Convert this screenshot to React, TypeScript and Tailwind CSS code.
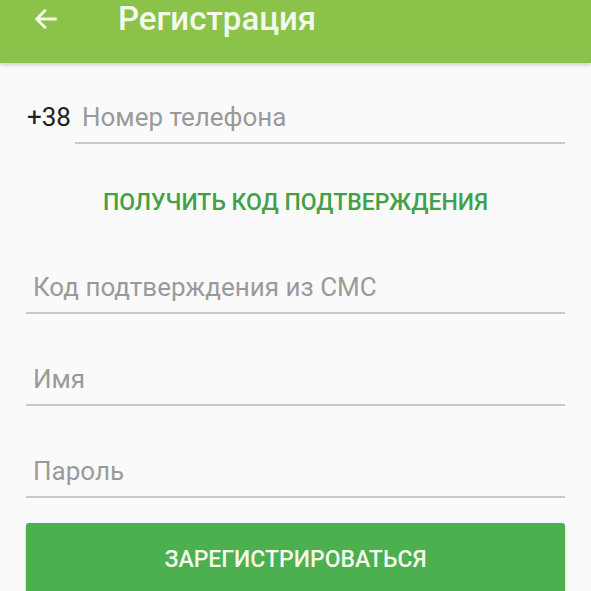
import React from 'react';

const Field: React.FC<{ label: string; prefix?: string }> = ({ label, prefix }) => (
  <div className="flex items-end">
    {prefix && <span className="mr-[4px] pb-[12px] text-[26px] leading-[30px] text-[#212121]">{prefix}</span>}
    <div className="flex-1 border-b-2 border-[#c8c8c8] pb-[10px] pl-[7px] text-[26px] leading-[30px] text-[#9a9a9a]">
      {label}
    </div>
  </div>
);

export default function App() {
  return (
    <div className="h-[591px] w-[591px] overflow-hidden bg-[#fafafa]" style={{ fontFamily: 'Roboto, "Noto Sans", sans-serif' }}>
      {/* Toolbar */}
      <div className="flex h-[63px] items-start bg-[#8bc34a] shadow-[0_2px_4px_rgba(0,0,0,0.18)]">
        <svg className="ml-[31px] mt-[5px]" width="30" height="28" viewBox="0 0 24 24" fill="none" stroke="#f4f9ec" strokeWidth="2.4" strokeLinecap="square">
          <path d="M20 12H5M11 5l-7 7 7 7" />
        </svg>
        <h1 className="ml-[57px] text-[33px] font-medium leading-[38px] text-[#f4f9ec]">Регистрация</h1>
      </div>

      {/* Form */}
      <div className="px-[26px] pt-[39px]">
        <div className="pl-[1px]">
          <Field prefix="+38" label="Номер телефона" />
        </div>

        <div className="mt-[46px] text-center text-[23px] font-medium leading-[26px] text-[#43a047]">
          ПОЛУЧИТЬ КОД ПОДТВЕРЖДЕНИЯ
        </div>

        <div className="mt-[56px] flex flex-col gap-[50px]">
          <Field label="Код подтверждения из СМС" />
          <Field label="Имя" />
          <Field label="Пароль" />
        </div>

        <button className="mt-[25px] flex h-[72px] w-full items-start justify-center rounded-[3px] bg-[#4caf50] pt-[23px] text-[23px] font-medium leading-[28px] text-[#f4f9ec] shadow-[0_1px_3px_rgba(0,0,0,0.2)]">
          ЗАРЕГИСТРИРОВАТЬСЯ
        </button>
      </div>
    </div>
  );
}
